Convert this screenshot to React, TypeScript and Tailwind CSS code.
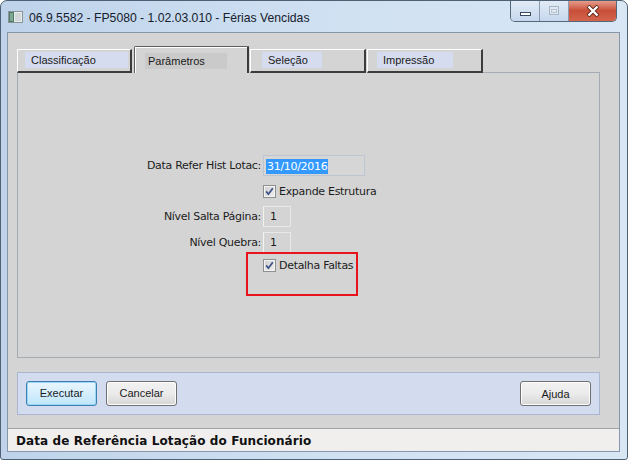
import React from 'react';

const uiFont = { fontFamily: '"Liberation Sans", Arial, sans-serif' };
const formFont = { fontFamily: '"DejaVu Sans", Tahoma, sans-serif' };

const CheckBox: React.FC = () => (
  <svg width="13" height="13" viewBox="0 0 13 13" className="shrink-0">
    <defs>
      <linearGradient id="cbg" x1="0" y1="0" x2="1" y2="1">
        <stop offset="0" stopColor="#d2d2d2" />
        <stop offset="1" stopColor="#ececec" />
      </linearGradient>
    </defs>
    <rect x="0.5" y="0.5" width="12" height="12" fill="#f4f4f4" stroke="#8e8f8f" />
    <rect x="2" y="2" width="9" height="9" fill="url(#cbg)" />
    <path d="M3.2 6.4 L5.4 9.2 L9.8 3.2" fill="none" stroke="#3c5186" strokeWidth="1.7" />
  </svg>
);

const Tab: React.FC<{ label: string; width: number; boxLeft: number; boxWidth: number }> = ({ label, width, boxLeft, boxWidth }) => (
  <div
    className="h-[24px] bg-[#d4d4d4] border-t border-l border-white border-r-2 border-b-2 border-r-[#3c3c3c] border-b-[#3c3c3c] shrink-0"
    style={{ width }}
  >
    <div className="mt-[2px] h-[16px] bg-[#d5dcf0] flex items-center pl-[6px] pt-px text-[11px] text-[#1a1a1a]" style={{ marginLeft: boxLeft, width: boxWidth }}>
      {label}
    </div>
  </div>
);

const Btn: React.FC<{ label: string; focused?: boolean }> = ({ label, focused }) => (
  <button
    className={
      focused
        ? 'w-[71px] h-[25px] rounded-[3px] border border-[#3c7fb1] bg-gradient-to-b from-[#eaf6fd] to-[#bee6fd] text-[11px] text-[#1a1a1a] shadow-[inset_0_0_0_1px_#9cd5f5]'
        : 'w-[71px] h-[25px] rounded-[3px] border border-[#707070] bg-gradient-to-b from-[#f2f2f2] via-[#ebebeb] to-[#d6d6d6] text-[11px] text-[#1a1a1a] shadow-[inset_0_0_0_1px_#fcfcfc]'
    }
  >
    {label}
  </button>
);

const App: React.FC = () => {
  return (
    <div
      className="w-[628px] h-[460px] flex flex-col rounded-t-[7px] rounded-b-[3px] border border-[#4e6073] bg-gradient-to-r from-[#bed3ea] via-[#cfe0f2] to-[#d9e7f5] overflow-hidden"
      style={uiFont}
    >
      {/* title bar */}
      <div className="h-[31px] flex items-center shrink-0">
        <svg width="15" height="12" viewBox="0 0 15 12" className="ml-[7px] mr-[6px] mt-px">
          <rect x="0.5" y="0.5" width="14" height="11" fill="#e9ecec" stroke="#8a9498" />
          <rect x="1" y="1" width="5" height="10" fill="#4f7a6a" />
          <rect x="2" y="2" width="3" height="8" fill="#7fa894" />
          <rect x="7" y="2" width="6" height="8" fill="#d2d8da" />
        </svg>
        <span className="text-[12.2px] text-[#15202c] pt-[3px]">06.9.5582 - FP5080 - 1.02.03.010 - Férias Vencidas</span>
        <div className="ml-auto mr-[10px] self-start -mt-px flex h-[22px] border border-t-0 border-[#55677b] rounded-b-[5px] overflow-hidden">
          <div className="w-[29px] h-full bg-gradient-to-b from-[#e3ecf7] to-[#c6d7ec] border-r border-[#8a9bb0] flex items-end justify-center pb-[5px]">
            <div className="w-[11px] h-[4px] bg-white border border-[#3a4a5e]" />
          </div>
          <div className="w-[29px] h-full bg-gradient-to-b from-[#e3ecf7] to-[#c6d7ec] border-r border-[#8a9bb0] flex items-center justify-center">
            <div className="w-[10px] h-[9px] border border-[#a8b6c6] bg-[#dfe7f1] flex items-center justify-center">
              <div className="w-[6px] h-[4px] border border-[#b9c5d3]" />
            </div>
          </div>
          <div className="w-[47px] h-full bg-gradient-to-b from-[#e6a494] via-[#c94f39] to-[#d4634b] flex items-center justify-center">
            <svg width="14" height="12" viewBox="0 0 14 12">
              <path d="M2 1 L12 11 M12 1 L2 11" stroke="#5a2418" strokeWidth="4" />
              <path d="M2.5 1.5 L11.5 10.5 M11.5 1.5 L2.5 10.5" stroke="#ffffff" strokeWidth="2.4" />
            </svg>
          </div>
        </div>
      </div>

      {/* client area */}
      <div className="flex-1 ml-[6px] mr-[7px] mb-[7px] border border-[#8796a8] bg-[#d4d4d4] flex flex-col">
        <div className="pt-[13px] pl-[9px] pr-[19px]">
          {/* tab headers */}
          <div className="flex items-end h-[27px]">
            <Tab label="Classificação" width={115} boxLeft={7} boxWidth={103} />
            <div className="w-[2px]" />
            <div className="w-[115px] h-[27px] shrink-0 border-t border-l border-[#5e5e5e] border-r-2 border-r-[#3c3c3c] rounded-tl-[2px] bg-[#d4d4d4]">
              <div className="h-full border-t border-l border-white">
                <div className="ml-[9px] mt-[5px] w-[82px] h-[16px] bg-[#cacaca] flex items-center pl-[3px] pt-px text-[11px] text-[#1a1a1a]">
                  Parâmetros
                </div>
              </div>
            </div>
            <div className="w-[1px]" />
            <Tab label="Seleção" width={116} boxLeft={11} boxWidth={60} />
            <div className="w-[1px]" />
            <Tab label="Impressão" width={116} boxLeft={9} boxWidth={76} />
            <div className="flex-1 h-[2px] border-b border-[#a5abb3]" />
          </div>

          {/* tab page */}
          <div className="relative h-[285px] border-l border-r border-b border-[#a5abb3] text-[11px] text-[#1c1c1c] tracking-[-0.3px]" style={formFont}>
            <div className="flex flex-col pt-[82px]">
              <div className="flex items-center h-[21px]">
                <div className="w-[245px] text-right pr-[2px] pt-[2px]">Data Refer Hist Lotac:</div>
                <div className="w-[102px] h-[21px] border border-[#bcc5d1] bg-[#d6d6d6] flex items-center pl-[2px] pt-px">
                  <span className="bg-[#3399ff] text-white leading-[15px] px-px">31/10/2016</span>
                </div>
              </div>
              <div className="flex items-center h-[13px] mt-[9px]">
                <div className="w-[245px]" />
                <CheckBox />
                <span className="ml-[3px] pt-px">Expande Estrutura</span>
              </div>
              <div className="flex items-center h-[21px] mt-[8px]">
                <div className="w-[245px] text-right pr-[2px] pt-px">Nível Salta Página:</div>
                <div className="w-[28px] h-[21px] border border-[#e8e8e8] border-l-[#f2f2f2] bg-[#d4d4d4] flex items-center pl-[6px] pt-px">1</div>
              </div>
              <div className="flex items-center h-[21px] mt-[5px]">
                <div className="w-[245px] text-right pr-[2px] pt-px">Nível Quebra:</div>
                <div className="w-[28px] h-[21px] border border-[#e8e8e8] border-l-[#f2f2f2] bg-[#d4d4d4] flex items-center pl-[6px] pt-px">1</div>
              </div>
              <div className="flex items-center h-[13px] mt-[6px]">
                <div className="w-[245px]" />
                <CheckBox />
                <span className="ml-[3px] pt-px">Detalha Faltas</span>
              </div>
            </div>
            {/* highlight annotation */}
            <div className="absolute left-[228px] top-[179px] w-[112px] h-[44px] border-2 border-[#e8141c]" />
          </div>

          {/* button bar */}
          <div className="mt-[14px] h-[43px] border border-[#a9b6d0] bg-[#d3dbee] flex items-center px-[8px]">
            <Btn label="Executar" focused />
            <div className="w-[9px]" />
            <Btn label="Cancelar" />
            <div className="ml-auto">
              <Btn label="Ajuda" />
            </div>
          </div>
        </div>

        {/* status bar */}
        <div
          className="mt-auto h-[23px] border-t border-[#a3a3a3] bg-[#f0efee] flex items-center pl-[8px] pt-px text-[12px] font-bold text-[#111] tracking-[0.1px]"
          style={formFont}
        >
          Data de Referência Lotação do Funcionário
        </div>
      </div>
    </div>
  );
};

export default App;
